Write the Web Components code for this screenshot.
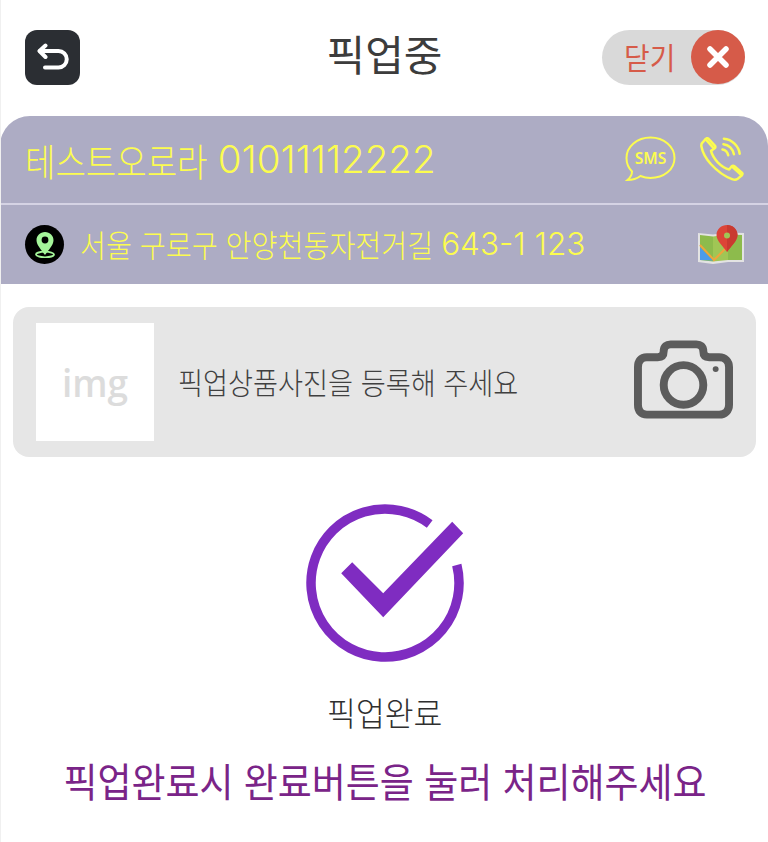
<!DOCTYPE html>
<html lang="ko">
<head>
<meta charset="utf-8">
<title>픽업중</title>
<style>
  html, body { margin: 0; padding: 0; background: #fff; }
  body { font-family: "Noto Sans CJK KR", "Noto Sans", sans-serif; font-weight: 300; }
</style>
</head>
<body>
<pickup-page>
  <top-bar title="픽업중"></top-bar>
  <customer-panel name="테스트오로라" phone="01011112222" street="서울 구로구 안양천동자전거길" lot="643-1 123"></customer-panel>
  <photo-card text="픽업상품사진을 등록해 주세요"></photo-card>
  <complete-action label="픽업완료" hint="픽업완료시 완료버튼을 눌러 처리해주세요"></complete-action>
</pickup-page>

<script>
class PickupPage extends HTMLElement {
  constructor() {
    super();
    this.attachShadow({ mode: 'open' });
    this.shadowRoot.innerHTML = `
      <style>
        :host {
          display: block;
          height: 842px;
          box-sizing: border-box;
          border-left: 1px solid #f0f0f0;
          overflow: hidden;
        }
      </style>
      <slot></slot>`;
  }
}

class TopBar extends HTMLElement {
  constructor() {
    super();
    this.attachShadow({ mode: 'open' });
  }
  connectedCallback() {
    const title = this.getAttribute('title') || '';
    this.shadowRoot.innerHTML = `
      <style>
        :host {
          display: grid;
          grid-template-columns: 1fr auto 1fr;
          align-items: center;
          height: 116px;
          padding: 0 23px 2px 24px;
          box-sizing: border-box;
        }
        .back {
          width: 55px;
          height: 55px;
          border-radius: 12px;
          background: #2b2e33;
          display: flex;
          align-items: center;
          justify-content: center;
        }
        h1 {
          margin: 0 1px 8px 0;
          font-size: 42px;
          font-weight: 400;
          color: #3c3c3c;
          line-height: 1;
        }
        .close {
          justify-self: end;
          width: 143px;
          height: 55px;
          border-radius: 28px;
          background: #d9d9d9;
          display: flex;
          align-items: center;
          justify-content: space-between;
          padding-left: 22px;
          box-sizing: border-box;
          color: #d65b49;
          font-size: 30px;
          font-weight: 400;
        }
        .close > span:first-child {
          display: inline-block;
          transform: scaleX(.93);
          transform-origin: 0 50%;
          margin-bottom: 3px;
        }
        .x {
          width: 54px;
          height: 54px;
          border-radius: 50%;
          background: #d65b49;
          display: flex;
          align-items: center;
          justify-content: center;
        }
      </style>
      <div class="back">
        <svg width="32" height="28" viewBox="0 0 32 28" fill="none" stroke="#fff" stroke-width="4" stroke-linecap="round" stroke-linejoin="round">
          <path d="M8.5 2.5 L2.5 8 L8.5 14"/>
          <path d="M3 8 H21.5 A8.25 8.25 0 0 1 21.5 24.5 H8"/>
        </svg>
      </div>
      <h1>${title}</h1>
      <div class="close">
        <span>닫기</span>
        <span class="x">
          <svg width="22" height="22" viewBox="0 0 22 22" stroke="#fff" stroke-width="5.5" stroke-linecap="round">
            <path d="M3 3 L19 19 M19 3 L3 19"/>
          </svg>
        </span>
      </div>`;
  }
}

class CustomerPanel extends HTMLElement {
  constructor() {
    super();
    this.attachShadow({ mode: 'open' });
  }
  connectedCallback() {
    const name = this.getAttribute('name') || '';
    const phone = this.getAttribute('phone') || '';
    const street = this.getAttribute('street') || '';
    const lot = this.getAttribute('lot') || '';
    this.shadowRoot.innerHTML = `
      <style>
        :host {
          display: block;
          background: #adacc4;
          border-radius: 30px 30px 0 0;
          color: #fcfc4f;
          margin-left: -1px;
        }
        .row {
          display: flex;
          align-items: center;
          box-sizing: border-box;
        }
        .name {
          height: 89px;
          padding: 0 24px 1px 25px;
          border-bottom: 2px solid #d5d3e4;
          font-size: 38px;
        }
        .addr {
          height: 79px;
          padding: 0 24px 0 25px;
          font-size: 31px;
        }
        .line {
          flex: 1;
          display: flex;
          align-items: center;
          white-space: nowrap;
        }
        .addr .line { margin: 0 0 2px 16px; }
        .ko { display: inline-block; transform-origin: 0 50%; }
        .num { font-family: Inter, "Noto Sans", sans-serif; font-weight: 300; }
        .name .ko { transform: scaleX(.87); margin-right: -17px; }
        .name .num { font-size: 38.5px; }
        .addr .ko { transform: scaleX(.91); margin-right: -27px; }
        .addr .num { font-size: 31.5px; }
        .pin {
          width: 39px;
          height: 39px;
          border-radius: 50%;
          background: #000;
          display: flex;
          align-items: center;
          justify-content: center;
        }
        .sms { margin-right: 24px; }
        svg { display: block; }
      </style>
      <div class="row name">
        <span class="line"><span class="ko">${name}</span><span class="num">${phone}</span></span>
        <svg class="sms" width="51" height="46" viewBox="0 0 51 46">
          <path d="M25.5 1.5 C39 1.5 49.5 10.5 49.5 22 C49.5 33.5 39 42 25.5 42 C21.5 42 18.5 41.3 15.5 40 C11.5 43 7 44 2.5 44 C5.5 41.5 7 39 7 35.5 C3.5 32 1.5 27.5 1.5 22 C1.5 10.5 12 1.5 25.5 1.5 Z" fill="none" stroke="#fcfc4f" stroke-width="2"/>
          <text x="25.5" y="27.5" text-anchor="middle" font-family="'Noto Sans', sans-serif" font-size="15.5" font-weight="600" fill="#fcfc4f">SMS</text>
        </svg>
        <svg width="44" height="44" viewBox="0 0 46 46" fill="none" stroke="#fcfc4f" stroke-width="2.6" stroke-linejoin="round" stroke-linecap="round">
          <path d="M8.5 1.5 L15.5 9 C16.3 10 16.2 11 15.3 11.8 L11.5 14.5 C12.5 18.5 15 22.5 18.5 26.5 C22.5 30.5 26.5 33.2 30.5 34 L33 30.8 C34 29.8 35 29.8 36 30.6 L43.8 37.2 C44.6 38 44.6 39 43.8 40 L39 44 C37.5 45 35.5 44.8 33.5 44 C25 41 17.5 35 11.5 28.5 C6 22.5 2.5 15.5 1.5 10 C1.2 8.5 1.5 7 2.5 6 L6 2 C6.8 1.2 7.7 1 8.5 1.5 Z"/>
          <path d="M6 2.5 L14 11.5 M33.5 31 L43.5 40"/>
          <path d="M23.5 13 C26.5 13.5 28.8 15.5 29.5 19"/>
          <path d="M24.5 7.5 C30 8 34.5 12.5 35.5 18"/>
          <path d="M25 1.8 C33.5 2.5 40.5 9.5 41.5 17.5"/>
        </svg>
      </div>
      <div class="row addr">
        <span class="pin">
          <svg width="20" height="27" viewBox="0 0 20 27">
            <ellipse cx="10" cy="23.5" rx="9" ry="2.8" fill="none" stroke="#a5f59a" stroke-width="1.8"/>
            <path d="M10 1 C5 1 1.5 4.8 1.5 9.2 C1.5 14 6.5 19 10 24 C13.5 19 18.5 14 18.5 9.2 C18.5 4.8 15 1 10 1 Z" fill="#a5f59a"/>
            <circle cx="10" cy="9" r="3.4" fill="#000"/>
          </svg>
        </span>
        <span class="line"><span class="ko">${street}</span><span class="num">${lot}</span></span>
        <svg width="46" height="39" viewBox="0 0 46 39">
          <path d="M0 8 L15 9.5 L30 7.5 L46 8 L46 37 L30 37 L15 39 L0 37 Z" fill="#e3e3e3"/>
          <path d="M2 10 L15 11.5 V36.5 L2 35 Z" fill="#8dbb4c"/>
          <path d="M15 11.5 L30 9.5 V35 L15 36.5 Z" fill="#a0c655"/>
          <path d="M30 9.5 L44 10 V35 L30 35 Z" fill="#8dbb4c"/>
          <path d="M2 22 L15 35.5 L2 35 Z" fill="#4d9be8"/>
          <path d="M2 20 L16 35 L28 23" fill="none" stroke="#eea53c" stroke-width="2"/>
          <path d="M29 0 C23.5 0 18.5 4 18.5 10 C18.5 16 25 21 29 27 C33 21 39.5 16 39.5 10 C39.5 4 34.5 0 29 0 Z" fill="#dc4437"/>
          <path d="M29 0 C34.5 0 39.5 4 39.5 10 C39.5 16 33 21 29 27 Z" fill="#c93a30"/>
          <circle cx="29" cy="10.5" r="3" fill="#a0c655"/>
        </svg>
      </div>`;
  }
}

class PhotoCard extends HTMLElement {
  constructor() {
    super();
    this.attachShadow({ mode: 'open' });
  }
  connectedCallback() {
    const text = this.getAttribute('text') || '';
    this.shadowRoot.innerHTML = `
      <style>
        :host {
          display: flex;
          align-items: center;
          height: 150px;
          margin: 23px 12px 0 12px;
          padding: 0 23px;
          box-sizing: border-box;
          background: #e6e6e6;
          border-radius: 16px;
        }
        .thumb {
          width: 118px;
          height: 118px;
          background: #fff;
          display: flex;
          align-items: center;
          justify-content: center;
          color: #dcdcdc;
          font-family: "Open Sans", sans-serif;
          font-weight: 600;
          font-size: 37px;
        }
        .txt {
          flex: 1;
          margin: 0 0 2px 24px;
          font-size: 30px;
          font-weight: 300;
          color: #404040;
          white-space: nowrap;
          transform: scaleX(.906);
          transform-origin: 0 50%;
        }
        svg { margin-bottom: 5px; }
      </style>
      <div class="thumb">img</div>
      <div class="txt">${text}</div>
      <svg width="99" height="79" viewBox="0 0 100 79" fill="none" stroke="#5c5c5c" stroke-width="8" stroke-linejoin="round">
        <path d="M13 17 H24 C28 17 30 15 30 11 C30 6 33 4 37 4 H63 C67 4 70 6 70 11 C70 15 72 17 76 17 H86 C92 17 96 21 96 27 V65 C96 71 92 75 86 75 H13 C7 75 4 71 4 65 V27 C4 21 7 17 13 17 Z"/>
        <circle cx="50" cy="45" r="20"/>
        <circle cx="82.5" cy="29" r="3" fill="#5c5c5c" stroke="none"/>
      </svg>`;
  }
}

class CompleteAction extends HTMLElement {
  constructor() {
    super();
    this.attachShadow({ mode: 'open' });
  }
  connectedCallback() {
    const label = this.getAttribute('label') || '';
    const hint = this.getAttribute('hint') || '';
    this.shadowRoot.innerHTML = `
      <style>
        :host {
          display: flex;
          flex-direction: column;
          align-items: center;
          padding-top: 45px;
        }
        svg { display: block; }
        .label {
          margin-top: 27px;
          font-size: 33px;
          font-weight: 300;
          line-height: 46px;
          color: #2f2f2f;
          transform: scaleX(.95);
        }
        .hint {
          margin-top: 20px;
          font-size: 40px;
          font-weight: 400;
          line-height: 50px;
          color: #7a2488;
          white-space: nowrap;
          transform: scaleX(.924);
        }
      </style>
      <svg width="160" height="160" viewBox="0 0 160 160">
        <path d="M124.7 22 A74 74 0 1 0 151.8 63" fill="none" stroke="#7f2cc1" stroke-width="9.5"/>
        <path d="M36.2 71.3 L47.2 60.3 L78.2 91.3 L147.2 19.7 L158.2 31.3 L78.2 115.3 Z" fill="#7f2cc1"/>
      </svg>
      <div class="label">${label}</div>
      <div class="hint">${hint}</div>`;
  }
}

customElements.define('pickup-page', PickupPage);
customElements.define('top-bar', TopBar);
customElements.define('customer-panel', CustomerPanel);
customElements.define('photo-card', PhotoCard);
customElements.define('complete-action', CompleteAction);
</script>
</body>
</html>
